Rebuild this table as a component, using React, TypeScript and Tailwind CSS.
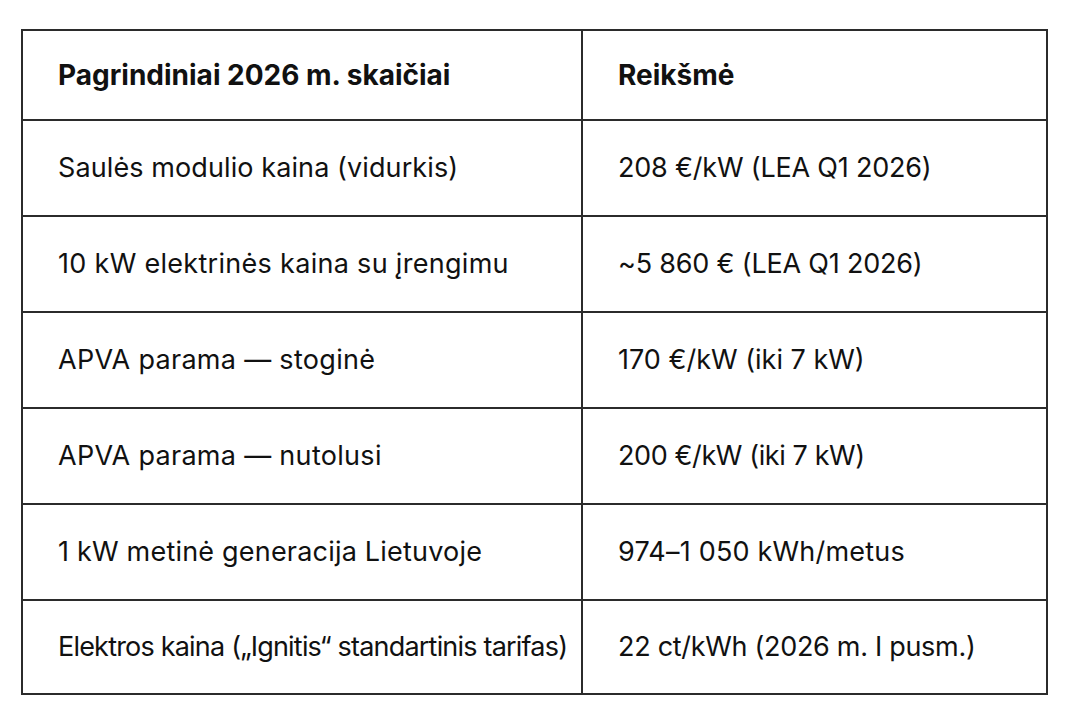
import React from "react";

const rows: { a: string; b: string; ta: string; tb: string }[] = [
  { a: "Saulės modulio kaina (vidurkis)", b: "208 €/kW (LEA Q1 2026)", ta: "tracking-[0.1px]", tb: "tracking-[-0.2px]" },
  { a: "10 kW elektrinės kaina su įrengimu", b: "~5 860 € (LEA Q1 2026)", ta: "tracking-[0.3px]", tb: "tracking-[-0.2px]" },
  { a: "APVA parama — stoginė", b: "170 €/kW (iki 7 kW)", ta: "tracking-[0.3px]", tb: "tracking-[0px]" },
  { a: "APVA parama — nutolusi", b: "200 €/kW (iki 7 kW)", ta: "tracking-[0.3px]", tb: "tracking-[-0.4px]" },
  { a: "1 kW metinė generacija Lietuvoje", b: "974–1 050 kWh/metus", ta: "tracking-[0.2px]", tb: "tracking-[0.2px]" },
  { a: "Elektros kaina („Ignitis“ standartinis tarifas)", b: "22 ct/kWh (2026 m. I pusm.)", ta: "tracking-[-0.8px]", tb: "tracking-[-0.3px]" },
];

export default function App() {
  return (
    <div
      className="w-[1069px] h-[713px] bg-white pt-[29px] pl-[21px] text-[#111111]"
      style={{ fontFamily: "Inter, 'Noto Sans', sans-serif" }}
    >
      <table className="border-collapse w-[1025px] table-fixed">
        <colgroup>
          <col className="w-[560px]" />
          <col className="w-[465px]" />
        </colgroup>
        <thead>
          <tr className="h-[90px]">
            <th className="border-2 border-[#2b2b2b] pl-[35px] text-left font-bold text-[28px] tracking-[0px]">
              Pagrindiniai 2026 m. skaičiai
            </th>
            <th className="border-2 border-[#2b2b2b] pl-[35px] text-left font-bold text-[28px] tracking-[0px]">
              Reikšmė
            </th>
          </tr>
        </thead>
        <tbody>
          {rows.map((r, i) => (
            <tr key={r.a} className={i === rows.length - 1 ? "h-[94px]" : "h-[96px]"}>
              <td className={`border-2 border-[#2b2b2b] pl-[35px] text-[27px] whitespace-nowrap ${r.ta}`}>
                {r.a}
              </td>
              <td className={`border-2 border-[#2b2b2b] pl-[35px] text-[27px] whitespace-nowrap ${r.tb}`}>
                {r.b}
              </td>
            </tr>
          ))}
        </tbody>
      </table>
    </div>
  );
}
